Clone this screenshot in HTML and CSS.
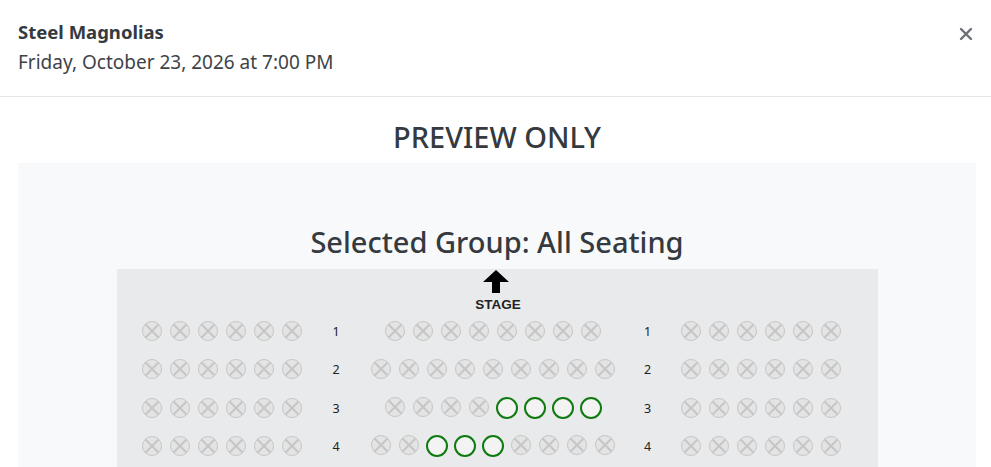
FILE: index.html
```html
<!DOCTYPE html>
<html lang="en">
<head>
    <meta charset="UTF-8">
    <meta name="viewport" content="width=device-width, initial-scale=1.0">
    <title>Seat Preview</title>
    <link rel="stylesheet" href="styles.css">
</head>
<body>
    <div class="modal">
        <div class="modal-header">
            <div>
                <h5 class="event-title">Steel Magnolias</h5>
                <div class="event-date">Friday, October 23, 2026 at 7:00 PM</div>
            </div>
            <button class="close-btn" aria-label="Close">
                <svg width="14" height="14" viewBox="0 0 14 14">
                    <path d="M2 2 L12 12 M12 2 L2 12" stroke="currentColor" stroke-width="2.4" stroke-linecap="round"/>
                </svg>
            </button>
        </div>
        <div class="modal-body">
            <h2 class="preview-label">PREVIEW ONLY</h2>
            <div class="chart-panel">
                <h3 class="group-title">Selected Group: All Seating</h3>
                <div class="seat-map" id="seatMap">
                    <div class="stage">
                        <svg width="26" height="23" viewBox="0 0 26 23">
                            <path d="M13 0 L26 12 L17 12 L17 23 L9 23 L9 12 L0 12 Z" fill="#000"/>
                        </svg>
                        <div class="stage-label">STAGE</div>
                    </div>
                </div>
            </div>
        </div>
    </div>

    <script>
        // x = sold / unavailable, o = open
        const rows = [
            { n: 1, left: 'xxxxxx', mid: 'xxxxxxxx', right: 'xxxxxx' },
            { n: 2, left: 'xxxxxx', mid: 'xxxxxxxxx', right: 'xxxxxx' },
            { n: 3, left: 'xxxxxx', mid: 'xxxxoooo', right: 'xxxxxx' },
            { n: 4, left: 'xxxxxx', mid: 'xxoooxxxx', right: 'xxxxxx' }
        ];

        const seatMap = document.getElementById('seatMap');

        function makeBlock(pattern) {
            const block = document.createElement('div');
            block.className = 'seat-block';
            for (const ch of pattern) {
                const seat = document.createElement('span');
                seat.className = ch === 'o' ? 'seat open' : 'seat taken';
                block.appendChild(seat);
            }
            return block;
        }

        function makeLabel(n) {
            const label = document.createElement('div');
            label.className = 'row-label';
            label.textContent = n;
            return label;
        }

        rows.forEach(row => {
            const el = document.createElement('div');
            el.className = 'seat-row';
            el.appendChild(makeBlock(row.left));
            el.appendChild(makeLabel(row.n));
            el.appendChild(makeBlock(row.mid));
            el.appendChild(makeLabel(row.n));
            el.appendChild(makeBlock(row.right));
            seatMap.appendChild(el);
        });
    </script>
</body>
</html>
```

FILE: styles.css
```css
* {
    margin: 0;
    padding: 0;
    box-sizing: border-box;
    font-family: 'Segoe UI', 'Noto Sans', sans-serif;
}

body {
    background: white;
    color: #343a40;
    overflow: hidden;
}

.modal-header {
    display: flex;
    justify-content: space-between;
    align-items: flex-start;
    padding: 19px 18px 21px 18px;
    border-bottom: 1px solid #e3e5e8;
}

.event-title {
    font-size: 18.5px;
    font-weight: 700;
    line-height: 26px;
    color: #343a40;
}

.event-date {
    font-size: 19px;
    line-height: 26px;
    margin-top: 4px;
    color: #3d4348;
}

.close-btn {
    background: none;
    border: none;
    color: #6c7075;
    margin-top: 8px;
    cursor: pointer;
    display: flex;
}

.modal-body {
    padding: 0 15px 0 18px;
}

.preview-label {
    text-align: center;
    font-size: 29px;
    font-weight: 500;
    line-height: 34px;
    margin-top: 23px;
    margin-bottom: 9px;
    color: #343a40;
}

.chart-panel {
    background: #f8f9fa;
    padding-top: 62px;
    height: 320px;
}

.group-title {
    text-align: center;
    font-size: 29px;
    font-weight: 500;
    line-height: 34px;
    margin-bottom: 10px;
    color: #343a40;
}

.seat-map {
    background: #e9eaec;
    width: 761px;
    margin: 0 auto;
    padding: 1px 0 20px 21px;
    display: flex;
    flex-direction: column;
    gap: 18px;
}

.stage {
    width: 707px;
    display: flex;
    flex-direction: column;
    align-items: center;
    margin-bottom: -10px;
}

.stage svg {
    margin-left: 9px;
}

.stage-label {
    font-family: 'Liberation Sans', Arial, sans-serif;
    font-weight: 700;
    font-size: 13.5px;
    line-height: 16px;
    margin-top: 4px;
    margin-left: 14px;
    color: #222;
}

.seat-row {
    display: grid;
    grid-template-columns: 168px 61px 252px 58px 168px;
    align-items: center;
    height: 20px;
}

.seat-block {
    display: flex;
    justify-content: center;
}

.row-label {
    text-align: center;
    font-size: 12.5px;
    color: #222;
}

.seat {
    position: relative;
    width: 20px;
    height: 20px;
    margin: 0 4px;
    border-radius: 50%;
}

.seat.taken {
    border: 1.5px solid #c6c6c6;
    background: #e4e4e4;
}

.seat.taken::before,
.seat.taken::after {
    content: '';
    position: absolute;
    left: 50%;
    top: 0;
    width: 1.5px;
    height: 100%;
    margin-left: -0.75px;
    background: #c6c6c6;
    transform: rotate(45deg);
}

.seat.taken::after {
    transform: rotate(-45deg);
}

.seat.open {
    width: 22px;
    height: 22px;
    margin: 0 3px;
    border: 2px solid #0f7a0f;
    background: #f3f3f3;
}
```
